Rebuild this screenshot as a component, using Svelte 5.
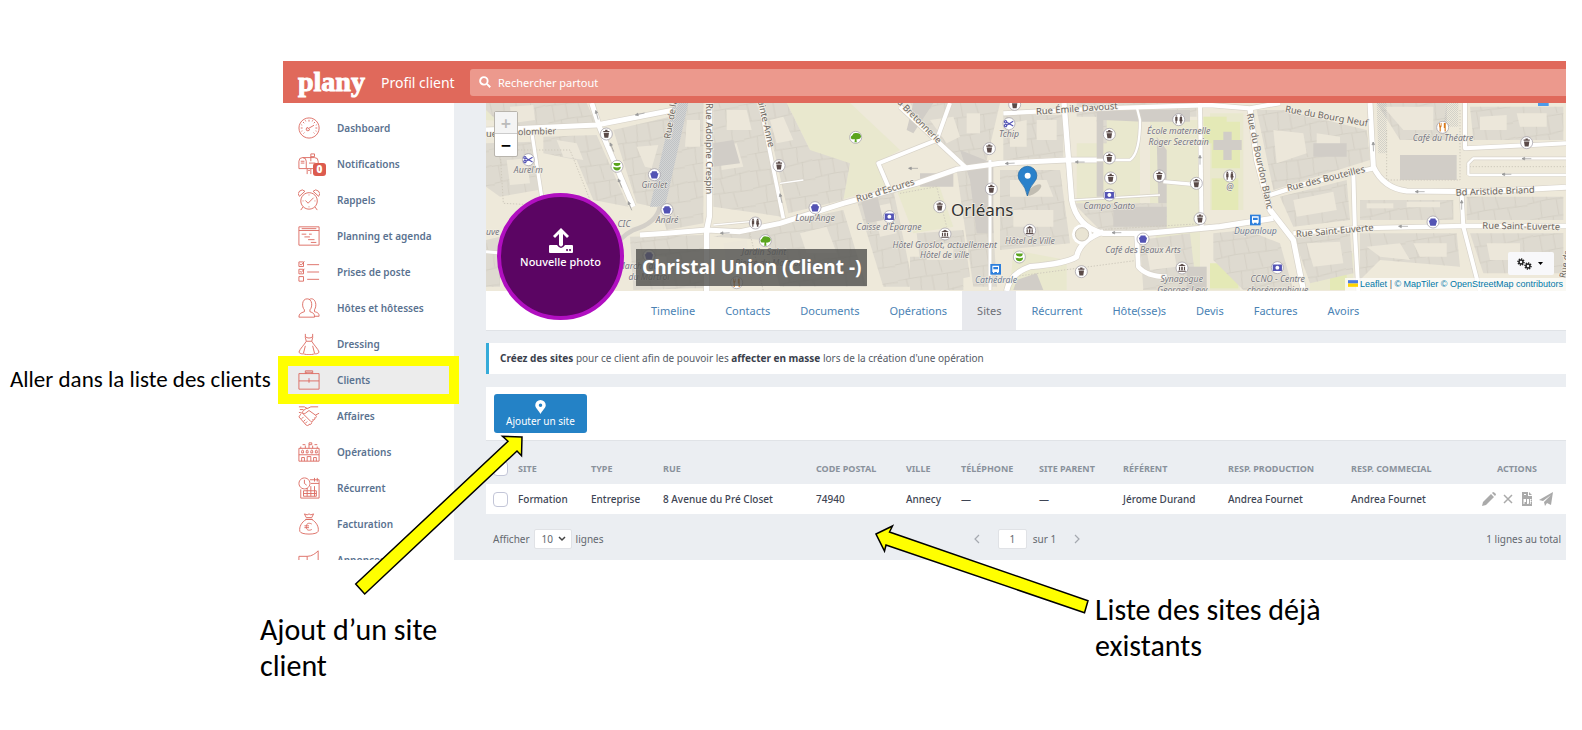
<script>
  const menu = [
    { label: 'Dashboard', icon: 'gauge' },
    { label: 'Notifications', icon: 'mailbox', badge: '0' },
    { label: 'Rappels', icon: 'alarm' },
    { label: 'Planning et agenda', icon: 'planning' },
    { label: 'Prises de poste', icon: 'checklist' },
    { label: 'Hôtes et hôtesses', icon: 'people' },
    { label: 'Dressing', icon: 'dress' },
    { label: 'Clients', icon: 'briefcase', active: true },
    { label: 'Affaires', icon: 'handshake' },
    { label: 'Opérations', icon: 'venue' },
    { label: 'Récurrent', icon: 'recurring' },
    { label: 'Facturation', icon: 'money' },
    { label: 'Annonces', icon: 'megaphone' }
  ];

  const icons = {
    gauge: 'M12 1a11 11 0 1 0 .1 0M10.500 13l7-4M11 11.500a1.800 1.800 0 1 0 1.500 1.500M12 3v2M5.500 5.500l1.300 1.300M3 12h2M19 12h2M18.500 5.500l-1.300 1.300M6 18l1-1M18 18l-1-1M8 3.600l.5 1.200M16 3.600l-.5 1.200M3.600 8.500l1 .4M20.400 8.500l-1 .4M3.800 15.500l1-.4M20.200 15.500l-1-.4',
    mailbox: 'M1 17V9a4 4 0 0 1 8 0v8ZM5 5h13a4 4 0 0 1 4 4v8H9M3 9h4M3 11h4M14 9V1M14 1h4v3h-4M10 17v6M14 17v6M12 11h7M11 19h2',
    alarm: 'M12 4a9 9 0 1 0 .1 0M8 12.500l3 3 6-6M1.500 8a4 4 0 0 1 6-5.500ZM22.500 8a4 4 0 0 0-6-5.500ZM5.500 19.500L3 23M18.500 19.500L21 23M12 6v1M12 19v1M5 13h1M18 13h1',
    planning: 'M1 2h22v20H1ZM1 6h22M4 10h5M7 13h6M11 16h7M14 19h6M4 4h16M12 10h3',
    checklist: 'M1 1h5v5H1ZM1 9h5v5H1ZM1 17h5v5H1ZM2 3l1.500 1.500L7 .5M2 11l1.500 1.500L7 8.500M10 4h13M10 12h13M10 20h13',
    people: 'M1 22c0-4 2-4.500 6-6v-2c-3-3-3-12 3-12s6 9 3 12v2c4 1.500 5 2 5 6ZM12 3c5-4 10 4 6 11v2c4 1 5 2 5 5h-5',
    dress: 'M8 1v4l1 4M16 1v4l-1 4M8 4c2 2 6 2 8 0M9 9h6M9 9C7 13 2 17 1 21c3 3 5 1 6 2 3 1 7 1 10 0 1-1 3 1 6-2-1-4-6-8-8-12M8 14l-2 8M16 14l2 8',
    briefcase: 'M1 5h22v17H1ZM8 5V2h8v3M9 5V3.500h6V5M1 13h22M12 10v5',
    handshake: 'M1 2h6l3 2 4-2h8M1 8l4 1 9 9c2 1 3-1 2-2 2 1 3-1 2-2 2 0 3-1 1-3l-7-5-4 3c-3 1-4-1-2-3l4-3M19 11l4-2M3 10l-2 3 8 9c2 1 3 0 3-1 2 1 3-1 3-2M4 15l2-2M6 18l2-2M8 20l2-2M2 5h4',
    venue: 'M1 8h22v14H1ZM1 15h22M3 8V6M8 8V5M12 8V2M16 8V5M21 8V6M12 2h3v2h-3M5 4h3M18 4h3M4 11a1 1 0 0 1 2 0v2H4ZM9 11a1 1 0 0 1 2 0v2H9ZM14 11a1 1 0 0 1 2 0v2h-2ZM19 11a1 1 0 0 1 2 0v2h-2ZM4 22v-4h3v4M10 22v-5h4v5M17 22v-4h3v4',
    recurring: 'M7 1a6 6 0 1 0 .1 0M7 3v4l2.500 2M13 3h10v20H3V13.500M14 7h9M18 1v4M21 1v4M6 15h14v6H6ZM6 18h14M10 12v9M14 10v11M18 10v11',
    money: 'M9 7C4 10 1 15 2 20c1 4 19 4 20 0 1-5-2-10-7-13ZM8 7h8M9 5L7 1l3 1 2-1 2 1 3-1-2 4ZM15 12c-4-2-6 0-6 3s2 5 6 3M7 14h5M7 16h5',
    megaphone: 'M1 8h9c5 0 9-3 12-6v16c-3-3-7-5-12-5H1ZM10 8v5M3 13v9h4v-9'
  };

  const tabs = ['Timeline', 'Contacts', 'Documents', 'Opérations', 'Sites', 'Récurrent', 'Hôte(sse)s', 'Devis', 'Factures', 'Avoirs'];

  const columns = [
    { title: 'Site', value: 'Formation', w: 73 },
    { title: 'Type', value: 'Entreprise', w: 72 },
    { title: 'Rue', value: '8 Avenue du Pré Closet', w: 153 },
    { title: 'Code postal', value: '74940', w: 90 },
    { title: 'Ville', value: 'Annecy', w: 55 },
    { title: 'Téléphone', value: '—', w: 78 },
    { title: 'Site parent', value: '—', w: 84 },
    { title: 'Référent', value: 'Jérome Durand', w: 105 },
    { title: 'Resp. production', value: 'Andrea Fournet', w: 123 },
    { title: 'Resp. commecial', value: 'Andrea Fournet', w: 117 }
  ];

  // Map geometry, three map units per pixel.
  const greens = [
    'M18 60L160 70L160 9H18Z', 'M920 9H1110V200L1020 215L990 150Z', 'M1080 9H1110L1260 150L1190 190L1220 260L1080 300Z',
    'M1250 270L1370 235L1420 380L1300 400Z', 'M1870 60H1980V310H1790V130H1870Z', 'M2010 60H2160V520H2090L2010 380Z',
    'M2190 40H2290V330H2190Z', 'M2540 460H2620V570H2490V510Z', 'M1600 450L1760 480V570H1590Z', 'M2190 490H2280V570H2190Z'
  ];
  const lawns = ['M2195 65H2280V205H2195Z', 'M2195 235H2275V330H2195Z', 'M2190 490H2275V565H2190Z', 'M2170 50H2240V130H2170Z', 'M2550 465H2600V570H2550Z'];
  const blocks = [
    'M18 9H320L350 75L80 90L18 30Z', 'M18 130L160 125L175 270L60 290L18 260Z', 'M190 110L350 105L445 320L340 300L290 180L190 160Z',
    'M400 90L570 50L520 320L470 310Z', 'M610 9H670V370L560 390L540 330Z', 'M700 9H830L880 190L905 350L700 320Z',
    'M850 9L920 9L990 150L1110 190L1090 300L925 340Z', 'M450 410L670 405V565H640L460 570Z', 'M700 410L1090 330L1160 560H900L860 420Z',
    'M18 420L60 410V560H18Z', 'M1290 9H1560L1520 180L1440 190L1340 90Z', 'M1570 45H1750V170L1570 180Z', 'M1560 210H1740L1770 430L1560 450Z',
    'M1790 9H2150V50H1790Z', 'M1850 60L1860 130H1880V60Z', 'M1780 310H2060V390H1860Z',
    'M1130 300L1240 270L1300 560H1210Z', 'M1430 210L1530 200L1550 560H1480Z', 'M1310 400L1450 390L1470 530L1330 560Z', 'M1290 470H1450V570H1290Z',
    'M1980 420L2130 400L2150 570H1990Z', 'M2330 30L2410 30L2660 90L2670 180L2380 270Z', 'M2400 290L2600 240L2610 360L2440 380Z',
    'M2640 300L2920 300V360H2640Z', 'M2440 410L2610 400L2620 520L2490 550Z', 'M2640 400L2930 400L2940 500L2700 480L2640 540Z',
    'M2690 9H2900V120L2760 120Z', 'M2970 20H3250V120H2980Z', 'M2960 290H3250V360H2960Z', 'M2970 400H3250V520H3010Z',
    'M2200 400L2300 390L2400 430L2440 570H2290L2200 480Z'
  ];
  const courts = [
    'M470 140L535 135L515 205L495 200Z', 'M620 60H660V140H615Z', 'M720 140L770 130L790 200L725 210Z', 'M80 180L140 175L150 250L90 255Z', 'M90 20L160 15L165 60L95 70Z',
    'M230 120L290 130L310 180L250 170Z', 'M740 30H800L815 90H740Z', 'M870 60L910 50L940 120L890 130Z', 'M490 470H560V520H490Z', 'M730 430L800 420L810 500H740Z', 'M960 400L1040 380L1070 460H980Z',
    'M1590 70L1640 60V140H1590Z', 'M1670 60H1730V120H1670Z', 'M1590 240H1700L1720 290H1590Z', 'M1350 60L1420 50L1440 110L1400 130Z', 'M1460 40H1500V100H1460Z',
    'M2380 90L2470 100L2480 160L2390 190Z', 'M2510 100L2580 110V150H2510Z', 'M2440 300L2560 275L2570 330L2450 350Z', 'M2480 430L2580 425L2590 490L2500 500Z',
    'M2660 440L2760 430L2790 480L2700 470Z', 'M2800 430H2900V470H2820Z', 'M3000 50L3080 45V90H3000Z', 'M3110 40H3200V80H3120Z', 'M3020 430H3120V480H3030Z', 'M2660 310H2740V325H2660Z', 'M2780 305H2880V322H2780Z',
    'M2000 450L2080 440L2090 500L2010 510Z', 'M1180 320L1230 310L1250 400L1200 410Z', 'M1340 430H1420V480H1340Z', 'M1600 330H1720V380H1600Z', 'M2710 20H2860V90L2770 90Z'
  ];
  const darks = [
    'M1300 9H1360L1300 100L1280 90ZM1440 150L1540 190L1540 400H1490L1470 240Z', 'M1850 30H2130V65H1990L1870 60V290H1850Z', 'M2030 110L2060 150V310H2035Z',
    'M1610 540L1670 520L1690 570H1600Z', 'M2200 120H2285V150H2200ZM2230 95H2255V180H2230Z', 'M2500 130H2600V170H2500Z', 'M2120 500H2180V570H2120Z',
    'M1900 320H2060V380H1900Z', 'M1320 220H1420V260H1320Z', 'M700 130L760 120L780 190L700 200Z', 'M1140 290L1190 280L1210 360L1160 370Z', 'M2760 165H2930V240H2760Z'
  ];
  const streets = [
    { d: 'M18 90L350 75L590 28', w: 15 }, { d: 'M335 9L360 85L460 320', w: 15 }, { d: 'M155 95L185 290', w: 10 },
    { d: 'M688 9V350L680 390V573', w: 16 }, { d: 'M840 9L910 355', w: 11 },
    { d: 'M480 405L560 400L680 390L780 395L900 370L1090 310L1310 250L1430 208L1560 190L1760 180L1850 180', w: 15 },
    { d: 'M1260 20L1460 205', w: 13 }, { d: 'M1410 9L1370 120L1195 190L1225 260', w: 12 }, { d: 'M1570 40L1870 25L2190 15L2310 25L2400 9', w: 13 },
    { d: 'M1752 9L1775 300Q1790 380 1870 400L2000 400L2220 380L2380 355', w: 16 }, { d: 'M1530 180V570', w: 9 },
    { d: 'M1870 395Q1800 420 1790 470Q1760 490 1650 500Q1590 520 1580 573', w: 16 }, { d: 'M1760 180L1950 180Q1980 160 1980 60L1970 20', w: 7 },
    { d: 'M2160 9L2165 390', w: 12 }, { d: 'M2050 245L2160 255', w: 10 }, { d: 'M1970 405L1975 500Q2000 530 2060 530', w: 14 },
    { d: 'M2310 25L2330 180L2370 330L2440 420L2470 570', w: 16 }, { d: 'M2370 285L2480 250L2680 205', w: 13 },
    { d: 'M2670 9L2680 200Q2710 265 2780 273L3000 275L3258 262', w: 15 }, { d: 'M2440 400L2620 385L2950 378L3258 378', w: 13 },
    { d: 'M2620 220L2625 400L2635 573', w: 12 }, { d: 'M2945 280L2950 380L3000 573', w: 12 }, { d: 'M2955 9V145L3258 130', w: 12 },
    { d: 'M2965 225V190L2980 175H3258M2965 225H3258', w: 7 }, { d: 'M700 375L810 365L850 385', w: 4 }, { d: 'M900 250L970 240', w: 4 },
    { d: 'M18 455L70 460', w: 9 }, { d: 'M1780 300L2040 285', w: 5 }
  ];
  const dotted = ['M60 150H270L330 300M60 150L70 310L170 315', 'M1260 280L1370 260L1400 380', 'M1840 390L2180 370', 'M1600 530L1980 480', 'M2960 200H3258', 'M2720 90V240H2940V30', 'M2050 530V573', 'M810 400L850 573'];
  const streetNames = [
    { t: 'ue', x: 18, y: 112, r: 0 }, { t: 'olombier', x: 114, y: 106, r: -2, s: 27 }, { t: 'Rue de la', x: 571, y: 118, r: -80, s: 28 },
    { t: 'Rue Adolphe Crespin', x: 679, y: 9, r: 90, s: 28 }, { t: 'Sainte-Anne', x: 830, y: -12, r: 77, s: 28 }, { t: 'la Bretonnerie', x: 1246, y: 4, r: 45, s: 27 },
    { t: "Rue d'Escures", x: 1132, y: 306, r: -17, s: 28 }, { t: 'Rue Émile Davoust', x: 1669, y: 44, r: -4, s: 28 },
    { t: 'Rue du Bourg Neuf', x: 2414, y: 36, r: 10, s: 28 }, { t: 'Rue du Bourdon Blanc', x: 2300, y: 42, r: 78, s: 28 },
    { t: 'Rue des Bouteilles', x: 2423, y: 274, r: -14, s: 28 }, { t: 'Rue Saint-Euverte', x: 2449, y: 412, r: -5, s: 28 },
    { t: 'Bd Aristide Briand', x: 2927, y: 287, r: -2, s: 28 }, { t: 'Rue Saint-Euverte', x: 3007, y: 386, r: 1, s: 28 },
    { t: 'Rue de', x: 3256, y: 535, r: -80, s: 26 }
  ];
  const places = [
    { t: "Aurel'm", x: 145, y: 220 }, { t: 'Girolet', x: 523, y: 263 }, { t: 'André', x: 561, y: 370 }, { t: 'CIC', x: 432, y: 381 },
    { t: 'uve', x: 38, y: 405 }, { t: "Loup'Ange", x: 1005, y: 364 }, { t: 'Jardin Saint', x: 852, y: 466 }, { t: 'Pierre du Martroi', x: 864, y: 498 },
    { t: 'Marché du', x: 474, y: 508 }, { t: 'du Martroi', x: 507, y: 540 }, { t: 'Tchip', x: 1587, y: 112 },
    { t: "Caisse d'Épargne", x: 1227, y: 391 }, { t: 'Hôtel Groslot, actuellement', x: 1394, y: 444 }, { t: 'Hôtel de ville', x: 1394, y: 475 },
    { t: 'Hôtel de Ville', x: 1650, y: 432 }, { t: 'Cathédrale', x: 1548, y: 550, blue: true }, { t: 'École maternelle', x: 2096, y: 102 },
    { t: 'Roger Secretain', x: 2096, y: 134 }, { t: 'Campo Santo', x: 1888, y: 326 }, { t: 'Café des Beaux Arts', x: 1989, y: 459 },
    { t: 'Synagogue', x: 2105, y: 547 }, { t: 'Georges Levy', x: 2107, y: 579 }, { t: 'Dupanloup', x: 2326, y: 403, blue: true }, { t: '@', x: 2250, y: 270 },
    { t: 'CCNO - Centre', x: 2393, y: 545 }, { t: 'chorégraphique', x: 2393, y: 578 }, { t: 'Café du Théatre', x: 2889, y: 124 }
  ];
  const pois = [
    ['bin', 379, 102], ['leaf', 411, 199], ['cut', 145, 179], ['shop', 523, 224], ['shop', 561, 329], ['bin', 897, 197], ['shop', 1005, 323],
    ['people', 826, 369], ['tree', 856, 422], ['tree', 1127, 112], ['shop', 507, 467], ['fork', 770, 548], ['cut', 1587, 71], ['bin', 1528, 146], ['bin', 1534, 267],
    ['bin', 1379, 320], ['bank', 1228, 350], ['museum', 1395, 402], ['museum', 1649, 391], ['leaf', 1618, 471], ['bin', 1888, 103], ['bin', 1888, 174],
    ['bin', 1892, 234], ['bank', 1888, 285], ['people', 2096, 59], ['bin', 2038, 228], ['bin', 2149, 250], ['bin', 2160, 356], ['shop', 1989, 417],
    ['bin', 1804, 515], ['museum', 2106, 504], ['people', 2249, 228], ['bank', 2392, 503], ['fork', 2888, 82], ['bin', 3140, 128], ['shop', 2859, 366], ['bin', 1604, 13]
  ];
  const arrows = [[1300, 205, 0], [1590, 190, -3], [1800, 186, 0], [1910, 398, 0], [2820, 275, 0], [2770, 379, 0], [3080, 223, 0], [3140, 176, 0], [735, 399, -3], [480, 42, -12],
    [396, 142, 68], [420, 250, 68], [450, 318, 68], [903, 295, 78], [351, 45, 75], [2945, 315, 90], [2680, 140, 88], [2160, 180, 90]];
</script>

{#snippet poi(kind, x, y)}
  <g transform="translate({x} {y})">
    <circle r="18" class="poi-disc" />
    <g transform="scale(1.15)">
      {#if kind === 'bin'}<path class="k-dark" d="M-8-8H8V-5H-8ZM-7-3H7L5 10H-5ZM-3-11H3V-8H-3Z" />
      {:else if kind === 'shop'}<path class="k-blue" d="M-11-4H11L7 10H-7ZM-6-9H6L8-4H-8Z" />
      {:else if kind === 'bank'}<path class="k-blue" fill-rule="evenodd" d="M-12-8H12V9H-12ZM0-5A5 5 0 1 0 .1-5Z" />
      {:else if kind === 'tree'}<path class="k-green" d="M-3 13L-2 5H-10Q-16-1-9-5Q-6-13 2-11Q14-11 14-1Q12 6 2 5L3 13Z" />
      {:else if kind === 'leaf'}<path class="k-green" d="M-9-9H9Q9-1 0-1T-9-9ZM-10 1Q0 5 10 1Q9 11 0 11T-10 1Z" />
      {:else if kind === 'cut'}<path class="k-line" d="M-6-4L11 6M-6 4L11-6M-9-8a3 3 0 1 0 .1 0M-9 2a3 3 0 1 0 .1 0" />
      {:else if kind === 'fork'}<path class="k-orange" d="M-9-11H-7V-5H-5V-11H-3V-2L-5 1V11H-8V1L-9-2ZM3-11H8V11H5V2H3Z" />
      {:else if kind === 'people'}<path class="k-dark" d="M-9-7H-3V3H-5V10H-8V3H-9ZM3-7H9V0H10V4H8V10H4V4H2ZM-8-11H-4V-8H-8ZM4-11H8V-8H4Z" />
      {:else}<path class="k-dark" d="M-10-5L0-11L10-5ZM-8-3H-5V6H-8ZM-2-3H2V6H-2ZM5-3H8V6H5ZM-10 7H10V10H-10Z" />{/if}
    </g>
  </g>
{/snippet}

{#snippet bus(x, y)}
  <g transform="translate({x} {y})">
    <path fill="#2d7fdc" d="M-16-16H16V16H-16Z" />
    <path fill="#fff" fill-rule="evenodd" d="M-10-11H10V8H8V11H4V8H-4V11H-8V8H-10ZM-7-7V0H7V-7Z" />
  </g>
{/snippet}

<div class="slide">
  <p class="note note-side">Aller dans la liste des clients</p>

  <div class="app">
    <header>
      <a class="logo" href="#accueil">plany</a>
      <h1>Profil client</h1>
      <label class="search">
        <svg viewBox="0 0 16 16" width="12" height="12" aria-hidden="true"><circle cx="6.500" cy="6.500" r="5" /><path d="M10.500 10.500L15 15" /></svg>
        <input type="search" placeholder="Rechercher partout" aria-label="Rechercher partout" />
      </label>
    </header>

    <nav class="sidebar" aria-label="Menu principal">
      {#each menu as item}
        <a href="#menu" class:active={item.active}>
          <span class="icon">
            <svg viewBox="0 0 24 24" width="22" height="22" aria-hidden="true"><path d={icons[item.icon]} /></svg>
            {#if item.badge}<b class="badge">{item.badge}</b>{/if}
          </span>
          {item.label}
        </a>
      {/each}
    </nav>

    <main>
      <section class="profile">
        <div class="map">
          <svg class="tiles" viewBox="18 9 3240 564" preserveAspectRatio="xMinYMin slice">
            <defs>
              <pattern id="parcels" width="190" height="150" patternUnits="userSpaceOnUse" patternTransform="rotate(-10)">
                <path d="M0 0L190 6M0 52L104 58L190 50M0 104L60 100L190 108M26 0L30 54M70 2L64 56M104 4V58M150 6L146 52M20 54V102M60 56V100M98 58L104 104M160 50L154 106M40 102L36 150M88 104V150M130 106L136 150" />
              </pattern>
              <pattern id="hatch" width="6" height="6" patternUnits="userSpaceOnUse"><path d="M0 0L6 6" stroke="#9aa0a6" stroke-width="2" /></pattern>
            </defs>
            <path d="M18 9H3258V573H18Z" fill="#eee9da" />
            {#each greens as d}<path {d} fill="#e9e8ce" />{/each}
            {#each lawns as d}<path {d} fill="#e4e9b6" />{/each}
            {#each blocks as d}<path {d} fill="#dedad0" /><path {d} fill="url(#parcels)" />{/each}
            {#each courts as d}<path {d} fill="#ece7da" />{/each}
            {#each darks as d}<path {d} fill="#d1cdc7" />{/each}
            {#each dotted as d}<path {d} class="dotted" />{/each}
            {#each streets as s}<path d={s.d} class="road" stroke="#d8d3c9" stroke-width={s.w + 4} />{/each}
            {#each streets as s}<path d={s.d} class="road" stroke="#fff" stroke-width={s.w} />{/each}
            <path d="M580 9H625L555 320H510Z" fill="#d3d4d4" /><path d="M580 9H625L555 320H510ZM2690 9H2720V160H2695ZM2900 9H2935V80H2890Z" fill="url(#hatch)" opacity=".5" />
            <path d="M540 320Q530 370 460 390Q420 410 400 450" fill="none" stroke="#d3cfc8" stroke-width="14" />
            <circle cx="1806" cy="403" r="30" fill="#fff" /><circle cx="1806" cy="403" r="20" fill="#e9e4d3" stroke="#cbc5ba" stroke-width="3" />
            {#each arrows as [x, y, r]}<path class="way" transform="translate({x} {y}) rotate({r})" d="M-14 0H14M-14 0l8-4v8Z" />{/each}
            {#each pois as [kind, x, y]}{@render poi(kind, x, y)}{/each}
            {@render bus(1547, 508)}
            {@render bus(2326, 360)}
            <path d="M3174 9H3206V18H3174Z" fill="#4c9bea" />
            {#each streetNames as n}<text class="street" font-size={n.s ?? 28} transform="translate({n.x} {n.y}) rotate({n.r})">{n.t}</text>{/each}
            {#each places as p}<text class="place" class:blue={p.blue} x={p.x} y={p.y}>{p.t}</text>{/each}
            <text class="city" x="1413" y="349">Orléans</text>
            <ellipse cx="1662" cy="270" rx="26" ry="10" fill="#000" opacity=".18" transform="rotate(-35 1662 270)" />
            <path d="M1642 288Q1637 262 1622 246A28 28 0 1 1 1663 246Q1648 262 1642 288Z" fill="#2a81cb" stroke="#1d639f" stroke-width="2" />
            <circle cx="1643" cy="227" r="9" fill="#fff" />
          </svg>
          <div class="zoom">
            <button type="button" class="off" aria-label="Zoom avant">+</button>
            <button type="button" aria-label="Zoom arrière">−</button>
          </div>
          <h2>Christal Union (Client -)</h2>
          <button type="button" class="gears" aria-label="Réglages">
            <svg viewBox="0 0 32 14" width="32" height="14" aria-hidden="true">
              <circle cx="6" cy="5" r="2" class="cog" /><circle cx="6" cy="5" r="3" class="teeth" />
              <circle cx="13" cy="9" r="2" class="cog" /><circle cx="13" cy="9" r="3" class="teeth" />
              <path d="M23 5H28L25.500 8Z" />
            </svg>
          </button>
          <p class="credits">
            <svg viewBox="0 0 12 8" width="10" height="7" aria-hidden="true"><path fill="#4c7be1" d="M0 0H12V4H0Z" /><path fill="#ffd500" d="M0 4H12V8H0Z" /></svg>
            <a href="#leaflet">Leaflet</a> | <a href="#maptiler">© MapTiler</a> <a href="#osm">© OpenStreetMap contributors</a>
          </p>
        </div>
        <button type="button" class="photo">
          <svg viewBox="0 0 26 26" width="26" height="26" aria-hidden="true"><path fill-rule="evenodd" d="M13 0L21 8L19 10L15 6V17Q13 20 11 17V6L7 10L5 8ZM2 17H9Q13 23 17 17H24Q25 17 25 18V24Q25 25 24 25H2Q1 25 1 24V18Q1 17 2 17ZM19 21a1 1 0 1 0 .1 0M22 21a1 1 0 1 0 .1 0" /></svg>
          Nouvelle photo
        </button>
        <nav class="tabs" aria-label="Profil">
          {#each tabs as tab}<a href="#tab" class:current={tab === 'Sites'}>{tab}</a>{/each}
        </nav>
      </section>

      <p class="tip"><b>Créez des sites</b> pour ce client afin de pouvoir les <b>affecter en masse</b> lors de la création d'une opération</p>

      <div class="toolbar">
        <button type="button">
          <svg viewBox="0 0 12 16" width="11" height="14" aria-hidden="true"><path fill-rule="evenodd" d="M6 0A6 6 0 0 1 12 6C12 9 8 12 6 16C4 12 0 9 0 6A6 6 0 0 1 6 0ZM6 4A2 2 0 1 0 6 8A2 2 0 1 0 6 4Z" /></svg>
          Ajouter un site
        </button>
      </div>

      <table>
        <colgroup>
          <col style="width: {32 / 10.8}%" />
          {#each columns as c}<col style="width: {c.w / 10.8}%" />{/each}
          <col />
        </colgroup>
        <thead>
          <tr>
            <th><input type="checkbox" aria-label="Tout sélectionner" /></th>
            {#each columns as c}<th>{c.title}</th>{/each}
            <th class="actions">Actions</th>
          </tr>
        </thead>
        <tbody>
          <tr>
            <td><input type="checkbox" aria-label="Sélectionner Formation" /></td>
            {#each columns as c}<td>{c.value}</td>{/each}
            <td class="actions">
              <div>
                <button type="button" aria-label="Modifier"><svg viewBox="0 0 14 14" width="14" height="14"><path d="M0 14L1 10L9 2L12 5L4 13ZM10 1L11 0Q12 0 14 2Q14 3 13 4Z" /></svg></button>
                <button type="button" aria-label="Supprimer"><svg viewBox="0 0 14 14" width="14" height="14"><path d="M3 3L11 11M11 3L3 11" stroke="#aaa" stroke-width="1.500" /></svg></button>
                <button type="button" aria-label="PDF"><svg viewBox="0 0 14 14" width="14" height="14"><path fill-rule="evenodd" d="M2 0H8V4H12V14H2ZM9 0L12 3H9ZM3.500 7V12H4.500V10H6V7ZM7 7V12H8.500L9 11V7ZM10 7V12H10.700V10H11.500V9H10.700V8H11.500V7ZM4 2V3H6V2Z" /></svg></button>
                <button type="button" aria-label="Envoyer"><svg viewBox="0 0 14 14" width="14" height="14"><path d="M14 0L12 13L8 11L6 14L5 10L12 3L4 9L0 8Z" /></svg></button>
              </div>
            </td>
          </tr>
        </tbody>
      </table>

      <footer>
        <label>Afficher
          <span class="select">
            <select><option>10</option></select>
            <svg viewBox="0 0 8 6" width="8" height="6" aria-hidden="true"><path d="M1 1L4 4L7 1" /></svg>
          </span>
          lignes
        </label>
        <div class="pager">
          <button type="button" aria-label="Page précédente"><svg viewBox="0 0 6 10" width="6" height="10"><path d="M5 1L1 5L5 9" /></svg></button>
          <input type="text" value="1" aria-label="Page" />
          <span>sur 1</span>
          <button type="button" aria-label="Page suivante"><svg viewBox="0 0 6 10" width="6" height="10"><path d="M1 1L5 5L1 9" /></svg></button>
        </div>
        <span class="total">1 lignes au total</span>
      </footer>
    </main>
  </div>

  <div class="captions">
    <p class="note big first">Ajout d’un site client</p>
    <p class="note big second">Liste des sites déjà existants</p>
  </div>

  <svg class="pointers" viewBox="0 0 1582 730" width="1582" height="730" aria-hidden="true">
    <path d="M522 437L502.500 436.300L508 441.300L355.700 584L364.700 594L517 451L521.500 455.700Z" />
    <path d="M876 534L892.500 526L889.500 532L1088 600.700L1084.500 612.700L886 545L884.500 551Z" />
  </svg>
</div>

<style>
  :global(body) { margin: 0; background: #fff; }
  .slide {
    position: relative;
    display: grid;
    grid-template-columns: 283px minmax(0, 1fr) 16px;
    padding-top: 61px;
    overflow: hidden;
    font-family: "Noto Sans", sans-serif;
    font-size: 11px;
    color: #555b66;
  }
  p, h1, h2 { margin: 0; }
  a { text-decoration: none; color: inherit; }
  button, input, select { font: inherit; color: inherit; }
  button { cursor: pointer; border: 0; padding: 0; background: none; }
  .note { font-family: Carlito, "Open Sans", sans-serif; font-size: 23px; color: #000; }
  .note-side { padding: 303px 0 0 10px; white-space: nowrap; line-height: 30px; }
  .captions { grid-column: 1 / -1; display: flex; padding: 32px 0 0 260px; }
  .big { font-size: 30px; line-height: 36px; }
  .first { width: 200px; margin: 20px 635px 0 0; flex: none; }
  .second { width: 250px; flex: none; }
  .pointers { position: absolute; top: 0; left: 0; z-index: 5; pointer-events: none; }
  .pointers path { fill: #ff0; stroke: #000; stroke-width: 1.5; }

  .app {
    display: grid;
    grid-template: 42px auto / 171px minmax(0, 1fr);
  }
  header {
    grid-column: 1 / -1;
    display: flex;
    align-items: center;
    background: #e0695b;
    color: #fff;
    padding-left: 15px;
  }
  .logo { width: 83px; font: bold 28px/36px "Liberation Serif", serif; -webkit-text-stroke: 1px #fff; }
  h1 { width: 89px; font-size: 14px; font-weight: 400; white-space: nowrap; }
  .search { flex: 1; display: flex; align-items: center; gap: 7px; height: 27px; padding-left: 9px; border-radius: 3px 0 0 3px; background: #ec998d; }
  .search svg { fill: none; stroke: #fff; stroke-width: 2.500; }
  .search input { flex: 1; border: 0; outline: 0; background: none; padding: 0; }
  .search input::placeholder { color: #fff; opacity: 1; }

  .sidebar {
    position: relative;
    z-index: 2;
    height: 0;
    min-height: 100%;
    box-sizing: border-box;
    padding-top: 7px;
    overflow-x: visible;
    overflow-y: clip;
    background: #fff;
  }
  .sidebar a { display: flex; align-items: center; height: 36px; padding-left: 15px; font-size: 10px; font-weight: 600; color: #5a7290; position: relative; white-space: nowrap; }
  .sidebar .icon { width: 39px; height: 22px; position: relative; }
  .sidebar svg { fill: none; stroke: #dc6a60; stroke-width: 1; }
  .badge { position: absolute; left: 15px; top: 10px; width: 13px; height: 13px; border-radius: 3px; background: #dc5b4e; color: #fff; font-size: 10px; line-height: 13px; text-align: center; }
  .sidebar .active { background: #ececec; }
  .active::after { content: ""; position: absolute; inset: -6px -5px; border: 10px solid #ff0; }

  main { background: #ebeef2; padding-left: 32px; }
  .profile { position: relative; background: #fff; border-bottom: 1px solid #e0e3e7; }
  .map { position: relative; height: 188px; overflow: hidden; }
  .tiles { display: block; width: 100%; height: 100%; }
  #parcels path { fill: none; stroke: #cfcac0; stroke-width: 2; }
  .road { fill: none; stroke-linejoin: round; }
  .dotted { fill: none; stroke: #cfcabd; stroke-width: 3; stroke-dasharray: 4 5; }
  .way { fill: #999; stroke: #999; stroke-width: 2; }
  .poi-disc { fill: #fff; stroke: #9a96a0; stroke-width: 2; }
  .k-dark { fill: #5a4a48; }
  .k-blue { fill: #5353b4; }
  .k-green { fill: #5aa41e; }
  .k-orange { fill: #d87a1f; }
  .k-line { fill: none; stroke: #5353b4; stroke-width: 3; }
  .street { fill: #6b655f; stroke: #f4f0e6; stroke-width: 4; paint-order: stroke; }
  .place { font-size: 26px; font-style: italic; text-anchor: middle; fill: #74757f; stroke: #f4f0e6; stroke-width: 3; paint-order: stroke; }
  .place.blue { fill: #6d7b94; }
  .city { font-size: 51px; fill: #333; stroke: #f4f0e6; stroke-width: 4; paint-order: stroke; }
  .zoom { position: absolute; left: 8px; top: 8px; width: 22px; border: 1px solid #b9b5ad; border-radius: 2px; background: #fff; }
  .zoom button { display: block; width: 100%; height: 22px; font-size: 18px; line-height: 20px; font-weight: 600; color: #000; }
  .zoom .off { color: #bbb; background: #f4f4f4; border-bottom: 1px solid #ccc; }
  h2 { position: absolute; left: 150px; top: 146px; padding: 0 6px; font-size: 19px; line-height: 37px; font-weight: 700; color: #fff; background: rgba(80, 80, 78, .8); white-space: nowrap; }
  .gears { position: absolute; right: 12px; top: 149px; width: 46px; height: 23px; background: #f8f8fa; border-radius: 2px; }
  .gears svg { display: block; margin: 0 auto; }
  .cog { fill: none; stroke: #222; stroke-width: 1.5; }
  .teeth { fill: none; stroke: #222; stroke-width: 1.5; stroke-dasharray: 1.2 1.1; }
  .credits { position: absolute; right: 0; bottom: 0; padding: 0 3px; background: rgba(255, 255, 255, .7); font: 9px/13px "Liberation Sans", sans-serif; white-space: nowrap; }
  .credits a { color: #0078a8; }
  .photo {
    position: absolute; left: 11px; top: 90px; z-index: 1; box-sizing: border-box; width: 127px; height: 127px;
    border: 4px solid #b00fc0; border-radius: 50%; background: #5b0563; color: #fff; font-size: 11px; font-weight: 500; line-height: 16px; white-space: nowrap;
    padding-bottom: 15px;
  }
  .photo svg { display: block; margin: 0 auto; fill: #fff; }
  .tabs { display: flex; padding-left: 150px; font-size: 11px; line-height: 39px; color: #4a82b4; }
  .tabs a { padding: 0 15px; }
  .tabs .current { background: #e8e9ed; color: #6c6f76; }

  .tip { margin: 12px 0 13px; padding-left: 11px; border-left: 3px solid #35abd9; background: #fff; font-size: 10px; line-height: 31px; }
  .tip b { color: #3a3f4c; }
  .toolbar { padding: 7px 8px; background: #fff; border-bottom: 1px solid #e0e3e7; }
  .toolbar button { width: 93px; height: 39px; border-radius: 3px; background: #2482c6; color: #fff; font-size: 10px; line-height: 14px; }
  .toolbar svg { display: block; margin: 0 auto; fill: #fff; }

  table { width: 100%; table-layout: fixed; border-collapse: collapse; margin-top: 11px; }
  th, td { padding: 0; text-align: left; white-space: nowrap; }
  th { height: 32px; font-size: 9px; font-weight: 700; color: #8a929c; text-transform: uppercase; }
  td { height: 30px; font-size: 10px; font-weight: 500; color: #3e4554; background: #fff; }
  .actions { text-align: center; }
  .actions div { display: flex; justify-content: center; gap: 5px; }
  .actions button { height: 14px; }
  .actions svg { display: block; fill: #aaa; }
  input[type="checkbox"] { appearance: none; display: block; box-sizing: border-box; width: 15px; height: 15px; margin: 0 0 0 7px; border: 1px solid #c3c6d8; border-radius: 4px; background: #fff; }

  footer { display: grid; grid-template-columns: 1fr auto 1fr; align-items: center; padding: 15px 5px 11px 7px; font-size: 10px; color: #63686f; }
  footer label, .pager { display: flex; align-items: center; gap: 4px; }
  .select { position: relative; }
  .select svg { position: absolute; right: 6px; top: 7px; fill: none; stroke: #444; stroke-width: 1.500; pointer-events: none; }
  select { appearance: none; width: 38px; height: 20px; padding: 0 0 0 7px; border: 1px solid #e0e2e6; border-radius: 2px; background: #fff; }
  .pager { gap: 6px; }
  .pager button { width: 12px; height: 20px; }
  .pager button:first-child { margin-right: 9px; }
  .pager button:last-child { margin-left: 9px; }
  .pager svg { display: block; margin: 0 auto; fill: none; stroke: #a5a9b0; stroke-width: 1.200; }
  .pager input { box-sizing: border-box; width: 29px; height: 20px; border: 1px solid #e0e2e6; border-radius: 2px; background: #fff; padding: 0; text-align: center; }
  .total { text-align: right; }
</style>
